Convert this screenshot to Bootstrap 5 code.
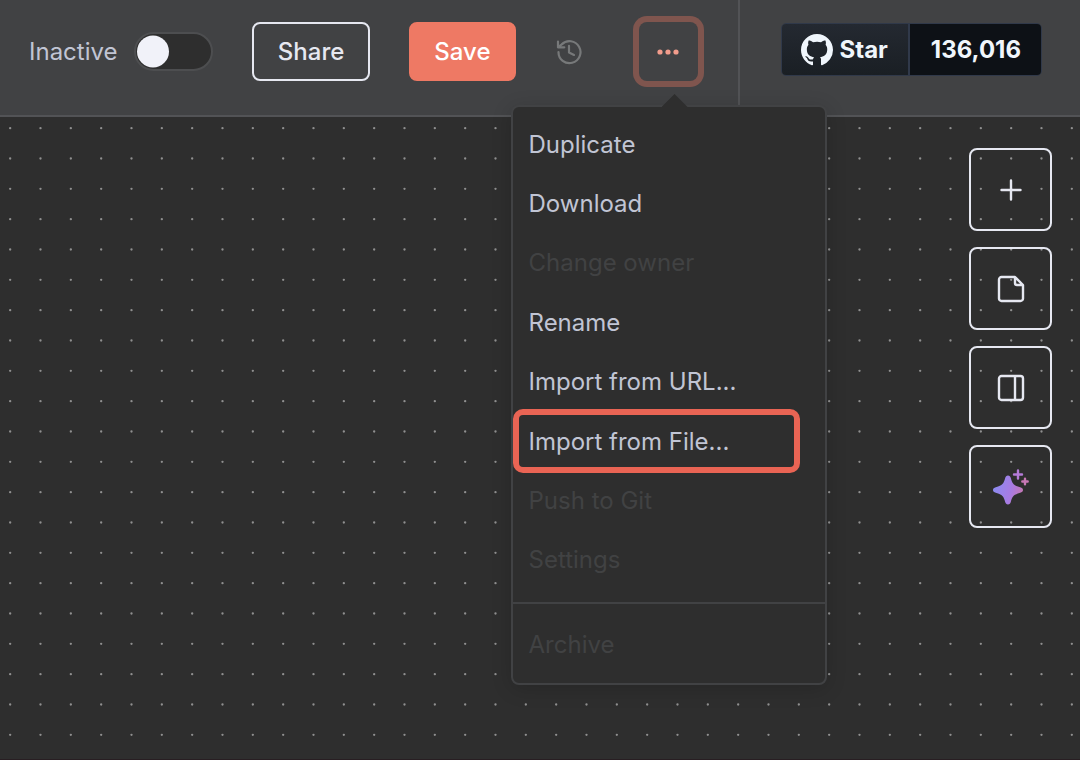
<!DOCTYPE html>
<html lang="en" data-bs-theme="dark">
<head>
<meta charset="utf-8">
<meta name="viewport" content="width=device-width, initial-scale=1">
<title>Workflow editor</title>
<link rel="stylesheet" href="https://cdn.jsdelivr.net/npm/bootstrap@5.3.0/dist/css/bootstrap.min.css">
<style>
:root {
  --surface: #414244;
  --canvas: #2e2e2e;
  --line: #525356;
  --text: #c1c5d4;
  --light: #e6e8f1;
  --accent: #ee7964;
}
body { font-family: Inter, "Liberation Sans", sans-serif; font-size: 24px; line-height: 32px; color: var(--text); background: var(--canvas); }
.topbar { background: var(--surface); border-bottom: 2px solid var(--line); }
.actions { padding: 22px 40px 34px 29px; }
.github-area { border-left: 2px solid var(--line); padding: 23px 38px 0 41px; }

.form-switch.activation { gap: 16px; margin-right: 39px; }
.activation .form-check-input {
  width: 79px; height: 39px; margin: 0; border: 2px solid #4d4e50; border-radius: 20px;
  background-color: var(--canvas); background-size: 35px 35px; background-position: left center;
  background-image: url("data:image/svg+xml,%3Csvg xmlns='http://www.w3.org/2000/svg' viewBox='0 0 35 35'%3E%3Ccircle cx='17' cy='17.500' r='16' fill='%23f1f2f9'/%3E%3C/svg%3E");
}

.btn-tool { height: 59px; padding: 0 24px; border-width: 2px; border-radius: 8px; font-size: 24px; font-weight: 500; line-height: 32px; }
.btn-share { color: var(--light); border-color: var(--light); margin-right: 39px; }
.btn-save { padding: 0 23px; color: #fff; background: var(--accent); border-color: var(--accent); margin-right: 40px; }
.btn-history { color: #77797a; margin-right: 57px; }
.btn-more { width: 59px; color: #f29c8c; box-shadow: 0 0 0 6px #7f554e; }
.btn-more:focus { box-shadow: 0 0 0 6px #7f554e; }

.github { height: 53px; font-weight: 700; color: #f0f6fc; border: 1px solid #30394a; border-radius: 5px; overflow: hidden; }
.github a { color: inherit; text-decoration: none; }
.github-star { gap: 7px; padding: 0 20px 0 19px; background: linear-gradient(#242931, #1a1f24); border-right: 2px solid #30394a; }
.github-count { padding: 0 20px 0 21px; background: #0d1116; }

.workflow-menu {
  top: 83px; right: -129px; width: 316px; padding: 8px 0; font-size: 24px;
  background: var(--canvas); border: 2px solid #414244; border-radius: 8px; box-shadow: 0 4px 20px rgba(0, 0, 0, .16);
}
.workflow-menu::before {
  content: ""; position: absolute; left: 149px; top: -13px; width: 26px; height: 13px;
  background: var(--canvas); clip-path: polygon(50% 0, 100% 100%, 0 100%);
}
.menu-main { height: 475px; }
.workflow-menu .dropdown-item { height: 100%; padding: 0 16px; line-height: 32px; color: var(--text); display: flex; align-items: center; background: none; }
.workflow-menu .dropdown-item:disabled { color: #414243; }
.menu-rule { height: 2px; margin: 12px 0 11px; background: #414244; }
.menu-last { height: 60px; }
.highlighted { position: relative; }
.highlighted::after { content: ""; position: absolute; inset: -3px 25px -2px 0; border: 6px solid #e96454; border-radius: 10px; pointer-events: none; }

.canvas {
  padding: 31px 28px; border-bottom: 1px solid #281e22;
  background-image: url("data:image/svg+xml,%3Csvg xmlns='http://www.w3.org/2000/svg' viewBox='0 0 90 90'%3E%3Cg fill='%23909090'%3E%3Ccircle cx='15' cy='15' r='1.150'/%3E%3Ccircle cx='45' cy='15' r='1.150'/%3E%3Ccircle cx='75' cy='15' r='1.150'/%3E%3Ccircle cx='15' cy='45' r='1.150'/%3E%3Ccircle cx='45' cy='45' r='1.150'/%3E%3Ccircle cx='75' cy='45' r='1.150'/%3E%3Ccircle cx='15' cy='75' r='1.150'/%3E%3Ccircle cx='45' cy='75' r='1.150'/%3E%3Ccircle cx='75' cy='75' r='1.150'/%3E%3C/g%3E%3C/svg%3E");
  background-size: 91px 91px; background-position: -5px -4px;
}
.side-tools { gap: 16px; }
.btn-side { width: 83px; height: 83px; padding: 0; color: var(--light); border: 2px solid var(--light); border-radius: 8px; }
svg { display: block; flex: none; }
</style>
</head>
<body class="d-flex flex-column min-vh-100">
<header class="topbar d-flex justify-content-end">
  <div class="actions d-flex flex-fill align-items-center">
    <div class="form-switch activation d-flex align-items-center p-0 m-0 me-auto">
      <label for="active">Inactive</label>
      <input class="form-check-input" type="checkbox" role="switch" id="active">
    </div>
    <button type="button" class="btn btn-tool btn-share">Share</button>
    <button type="button" class="btn btn-tool btn-save">Save</button>
    <button type="button" class="btn btn-history p-0 border-0" aria-label="Workflow history">
      <svg width="26" height="26" viewBox="0 0 26 26" fill="none" stroke="currentColor" stroke-width="2.200" stroke-linecap="round" stroke-linejoin="round"><path d="M2.500 13a11 11 0 1 0 3.200-7.600L2 8.300M2 2.500v5.800h6.300M13 6.800v6.700l5 2.400"/></svg>
    </button>
    <div class="dropdown">
      <button type="button" class="btn btn-tool btn-more p-0 border-0 d-flex align-items-center justify-content-center" aria-label="More actions" aria-expanded="true">
        <svg width="22" height="6" viewBox="0 0 22 6" fill="currentColor"><circle cx="3" cy="3" r="2.600"/><circle cx="11" cy="3" r="2.600"/><circle cx="19" cy="3" r="2.600"/></svg>
      </button>
      <div class="dropdown-menu workflow-menu show">
        <ul class="menu-main list-unstyled d-flex flex-column m-0">
          <li class="flex-fill"><button type="button" class="dropdown-item">Duplicate</button></li>
          <li class="flex-fill"><button type="button" class="dropdown-item">Download</button></li>
          <li class="flex-fill"><button type="button" class="dropdown-item" disabled>Change owner</button></li>
          <li class="flex-fill"><button type="button" class="dropdown-item">Rename</button></li>
          <li class="flex-fill"><button type="button" class="dropdown-item">Import from URL...</button></li>
          <li class="flex-fill highlighted"><button type="button" class="dropdown-item">Import from File...</button></li>
          <li class="flex-fill"><button type="button" class="dropdown-item" disabled>Push to Git</button></li>
          <li class="flex-fill"><button type="button" class="dropdown-item" disabled>Settings</button></li>
        </ul>
        <div class="menu-rule" role="separator"></div>
        <div class="menu-last"><button type="button" class="dropdown-item" disabled>Archive</button></div>
      </div>
    </div>
  </div>
  <div class="github-area">
    <div class="github d-flex">
      <a href="#" class="github-star d-flex align-items-center">
        <svg width="32" height="32" viewBox="0 0 16 16" fill="currentColor" aria-hidden="true"><path d="M8 0C3.580 0 0 3.580 0 8c0 3.540 2.290 6.530 5.470 7.590.4.070.55-.17.55-.38 0-.19-.01-.82-.01-1.490-2.010.37-2.530-.49-2.690-.94-.09-.23-.48-.94-.82-1.130-.28-.15-.68-.52-.01-.53.63-.01 1.080.58 1.230.82.72 1.210 1.870.87 2.330.66.07-.52.28-.87.51-1.070-1.780-.2-3.640-.89-3.640-3.950 0-.87.31-1.590.82-2.150-.08-.2-.36-1.020.08-2.120 0 0 .67-.21 2.200.82.64-.18 1.320-.27 2-.27s1.360.09 2 .27c1.530-1.040 2.200-.82 2.200-.82.44 1.100.16 1.920.08 2.120.51.56.82 1.270.82 2.150 0 3.070-1.870 3.750-3.650 3.950.29.25.54.73.54 1.480 0 1.070-.01 1.930-.01 2.200 0 .21.15.46.55.38A8.010 8.010 0 0 0 16 8c0-4.420-3.580-8-8-8z"/></svg>
        Star
      </a>
      <a href="#" class="github-count d-flex align-items-center">136,016</a>
    </div>
  </div>
</header>
<main class="canvas flex-fill">
  <div class="side-tools d-flex flex-column align-items-end">
    <button type="button" class="btn btn-side d-flex align-items-center justify-content-center" aria-label="Add node">
      <svg width="22" height="22" viewBox="0 0 22 22" fill="none" stroke="currentColor" stroke-width="2.400" stroke-linecap="round"><path d="M11 1.500v19M1.500 11h19"/></svg>
    </button>
    <button type="button" class="btn btn-side d-flex align-items-center justify-content-center" aria-label="Add sticky note">
      <svg width="28" height="28" viewBox="0 0 28 28" fill="none" stroke="currentColor" stroke-width="2.400" stroke-linejoin="round"><path d="M18 2H4.500A2.500 2.500 0 0 0 2 4.500v19A2.500 2.500 0 0 0 4.500 26h19a2.500 2.500 0 0 0 2.500-2.500V10zM18 2v6a2 2 0 0 0 2 2h6"/></svg>
    </button>
    <button type="button" class="btn btn-side d-flex align-items-center justify-content-center" aria-label="Toggle panel">
      <svg width="28" height="28" viewBox="0 0 28 28" fill="none" stroke="currentColor" stroke-width="2.400"><rect x="2" y="2" width="24" height="24" rx="2.500"/><path d="M18 2v24"/></svg>
    </button>
    <button type="button" class="btn btn-side d-flex align-items-center justify-content-center" aria-label="Ask assistant">
      <svg width="36" height="36" viewBox="0 0 36 36">
        <defs><linearGradient id="spark" gradientUnits="userSpaceOnUse" x1="0" y1="18" x2="36" y2="26"><stop offset="0" stop-color="#8b8bf0"/><stop offset=".5" stop-color="#a87be2"/><stop offset=".85" stop-color="#c878b0"/></linearGradient></defs>
        <path fill="url(#spark)" d="M15 6.500c1.500 0 2.400 1 2.800 2.500 1.600 5.600 2.600 7.400 9.400 9.200 1.800.5 2.800 1.300 2.800 2.800s-1 2.300-2.800 2.800c-6.800 1.800-7.800 3.600-9.400 9.200-.4 1.500-1.300 2.500-2.800 2.500s-2.400-1-2.800-2.500c-1.600-5.600-2.600-7.400-9.400-9.200C1 23.300 0 22.500 0 21s1-2.300 2.800-2.800c6.800-1.800 7.800-3.600 9.400-9.200.4-1.500 1.300-2.500 2.800-2.500z"/>
        <path d="M25 1.500v8M21 5.500h8" stroke="#b47bd8" stroke-width="2.400" stroke-linecap="round"/>
        <path d="M32 9.800v5.400M29.300 12.500h5.400" stroke="#c878b5" stroke-width="2.400" stroke-linecap="round"/>
      </svg>
    </button>
  </div>
</main>
<script src="https://cdn.jsdelivr.net/npm/bootstrap@5.3.0/dist/js/bootstrap.bundle.min.js"></script>
</body>
</html>
